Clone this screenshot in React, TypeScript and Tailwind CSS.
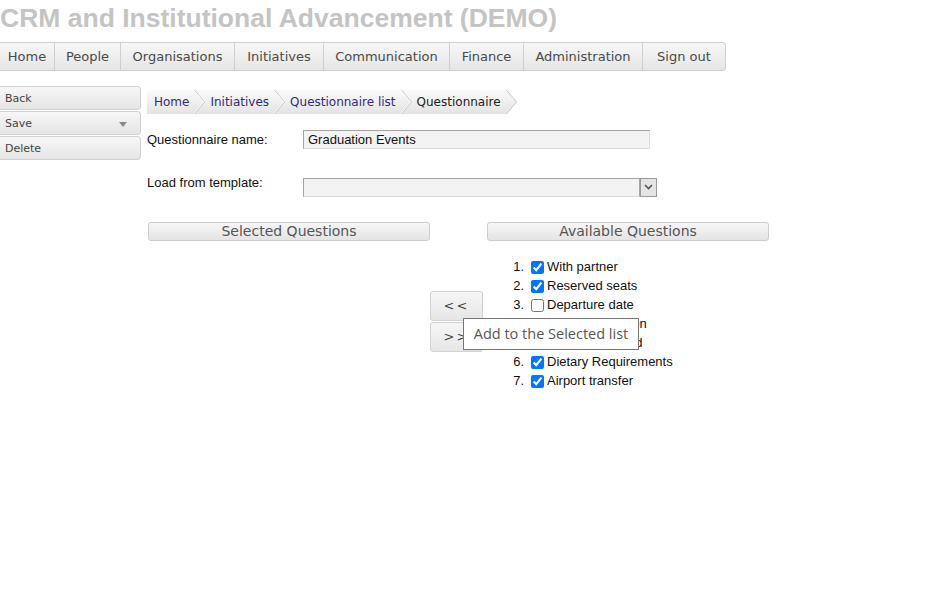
import React from "react";

const navItems: [string, number][] = [
  ["Home", 55],
  ["People", 66],
  ["Organisations", 114],
  ["Initiatives", 89],
  ["Communication", 126],
  ["Finance", 74],
  ["Administration", 119],
  ["Sign out", 82],
];

const crumbs = ["Home", "Initiatives", "Questionnaire list", "Questionnaire"];

const questions: [string, boolean][] = [
  ["With partner", true],
  ["Reserved seats", true],
  ["Departure date", false],
  ["Flight information", false],
  ["Parking required", false],
  ["Dietary Requirements", true],
  ["Airport transfer", true],
];

function Chevron({ last }: { last?: boolean }) {
  return (
    <svg width="12" height="24" viewBox="0 0 12 24" className="shrink-0">
      {last && <polygon points="0,0 12,0 12,24 0,24 10,12" fill="#ffffff" />}
      <polyline points="0.5,0 10.5,12 0.5,24" fill="none" stroke="#c4c4c4" strokeWidth="1" />
      {!last && <polyline points="-0.5,0 9.5,12 -0.5,24" fill="none" stroke="#fafafa" strokeWidth="1" />}
    </svg>
  );
}

export default function App() {
  return (
    <div className="relative w-[929px] h-[597px] overflow-hidden bg-white">
      <h1 className="pt-[1px] font-['Liberation_Sans',Arial,sans-serif] font-bold text-[26.5px] leading-[35px] text-[#c4c4c4] whitespace-nowrap">
        CRM and Institutional Advancement (DEMO)
      </h1>

      <nav className="mt-[6px] flex h-[29px] w-[726px] border border-[#cfcfcf] border-l-0 rounded-r-[4px] bg-linear-to-b from-[#f7f7f7] to-[#e6e6e6] font-['DejaVu_Sans',Verdana,sans-serif] text-[13px] text-[#4a4a4a]">
        {navItems.map(([label, w], i) => (
          <div
            key={label}
            style={{ width: w }}
            className={`flex items-center justify-center h-full ${i < navItems.length - 1 ? "border-r border-[#cfcfcf]" : ""}`}
          >
            {label}
          </div>
        ))}
      </nav>

      <div className="mt-[13px] flex">
        {/* sidebar */}
        <div className="mt-[2px] w-[141px] flex flex-col gap-[1px] font-['DejaVu_Sans',Verdana,sans-serif] text-[11px] text-[#444]">
          {["Back", "Save", "Delete"].map((b) => (
            <div
              key={b}
              className="h-[24px] flex items-center justify-between pl-[5px] pr-[13px] pt-[2px] border border-l-0 border-[#d0d0d0] rounded-r-[4px] bg-linear-to-b from-[#f7f7f7] to-[#e5e5e5]"
            >
              <span>{b}</span>
              {b === "Save" && (
                <svg width="8" height="5" viewBox="0 0 8 5">
                  <polygon points="0,0 8,0 4,5" fill="#8a8a8a" />
                </svg>
              )}
            </div>
          ))}
        </div>

        {/* main */}
        <div className="ml-[6px] mt-[6px] flex flex-col">
          <div className="flex h-[24px] w-[368px] items-center bg-linear-to-b from-[#fbfbfb] to-[#e3e3e3] font-['DejaVu_Sans',Verdana,sans-serif] text-[12px]">
            {crumbs.map((c, i) => (
              <React.Fragment key={c}>
                <span
                  className={`whitespace-nowrap ${i === 0 ? "pl-[7px]" : "pl-[4px]"} pr-[5px] ${
                    i === crumbs.length - 1 ? "text-[#222]" : "text-[#35287f]"
                  }`}
                >
                  {c}
                </span>
                <Chevron last={i === crumbs.length - 1} />
              </React.Fragment>
            ))}
          </div>

          <div className="mt-[16px] flex items-center font-['Liberation_Sans',Arial,sans-serif] text-[13px] text-[#111]">
            <div className="w-[156px]">Questionnaire name:</div>
            <div className="w-[347px] h-[19px] border border-[#a5a5a5] border-b-[#dcdcdc] border-r-[#dcdcdc] bg-[#f3f3f3] pl-[4px] leading-[17px]">
              Graduation Events
            </div>
          </div>

          <div className="mt-[28px] flex items-start font-['Liberation_Sans',Arial,sans-serif] text-[13px] text-[#111]">
            <div className="w-[156px] leading-[15px] -mt-[3px]">Load from template:</div>
            <div className="flex h-[19px]">
              <div className="w-[337px] h-[19px] border border-[#a5a5a5] border-b-[#dcdcdc] bg-[#f3f3f3]" />
              <div className="w-[17px] h-[19px] border border-[#9a9a9a] bg-[#e4e4e4] flex items-center justify-center">
                <svg width="9" height="6" viewBox="0 0 9 6">
                  <polyline points="1,1 4.5,4.5 8,1" fill="none" stroke="#555" strokeWidth="1.6" />
                </svg>
              </div>
            </div>
          </div>

          <div className="relative mt-[25px] flex">
            <div className="w-[283px] pl-[1px]">
              <div className="h-[19px] border border-[#cdcdcd] rounded-[3px] bg-linear-to-b from-[#f6f6f6] to-[#e4e4e4] flex items-center justify-center font-['DejaVu_Sans',Verdana,sans-serif] text-[14px] text-[#555]">
                Selected Questions
              </div>
            </div>

            <div className="w-[57px] pt-[69px] flex flex-col gap-[1px]">
              {["<<", ">>"].map((s) => (
                <div
                  key={s}
                  className="w-[53px] h-[30px] border border-[#d2d2d2] rounded-[3px] bg-linear-to-b from-[#f6f6f6] to-[#e6e6e6] flex items-center justify-center font-['DejaVu_Sans',Verdana,sans-serif] text-[13px] tracking-[2px] text-[#444]"
                >
                  {s}
                </div>
              ))}
            </div>

            <div className="w-[282px]">
              <div className="h-[19px] border border-[#cdcdcd] rounded-[3px] bg-linear-to-b from-[#f6f6f6] to-[#e4e4e4] flex items-center justify-center font-['DejaVu_Sans',Verdana,sans-serif] text-[14px] text-[#555]">
                Available Questions
              </div>
              <ol className="mt-[17px] font-['Liberation_Sans',Arial,sans-serif] text-[13px] text-[#111]">
                {questions.map(([q, c], i) => (
                  <li key={q} className="flex items-center h-[19px]">
                    <span className="w-[37px] text-right">{i + 1}.</span>
                    <input
                      type="checkbox"
                      defaultChecked={c}
                      className="ml-[7px] mr-[3px] w-[13px] h-[13px] accent-[#0075ff]"
                    />
                    <span>{q}</span>
                  </li>
                ))}
              </ol>
            </div>

            <div className="absolute left-[316px] top-[96px] w-[176px] h-[32px] border border-[#767676] bg-white flex items-center justify-center font-['Open_Sans','Noto_Sans',sans-serif] text-[14.5px] text-[#575757] whitespace-nowrap">
              Add to the Selected list
            </div>
          </div>
        </div>
      </div>
    </div>
  );
}
